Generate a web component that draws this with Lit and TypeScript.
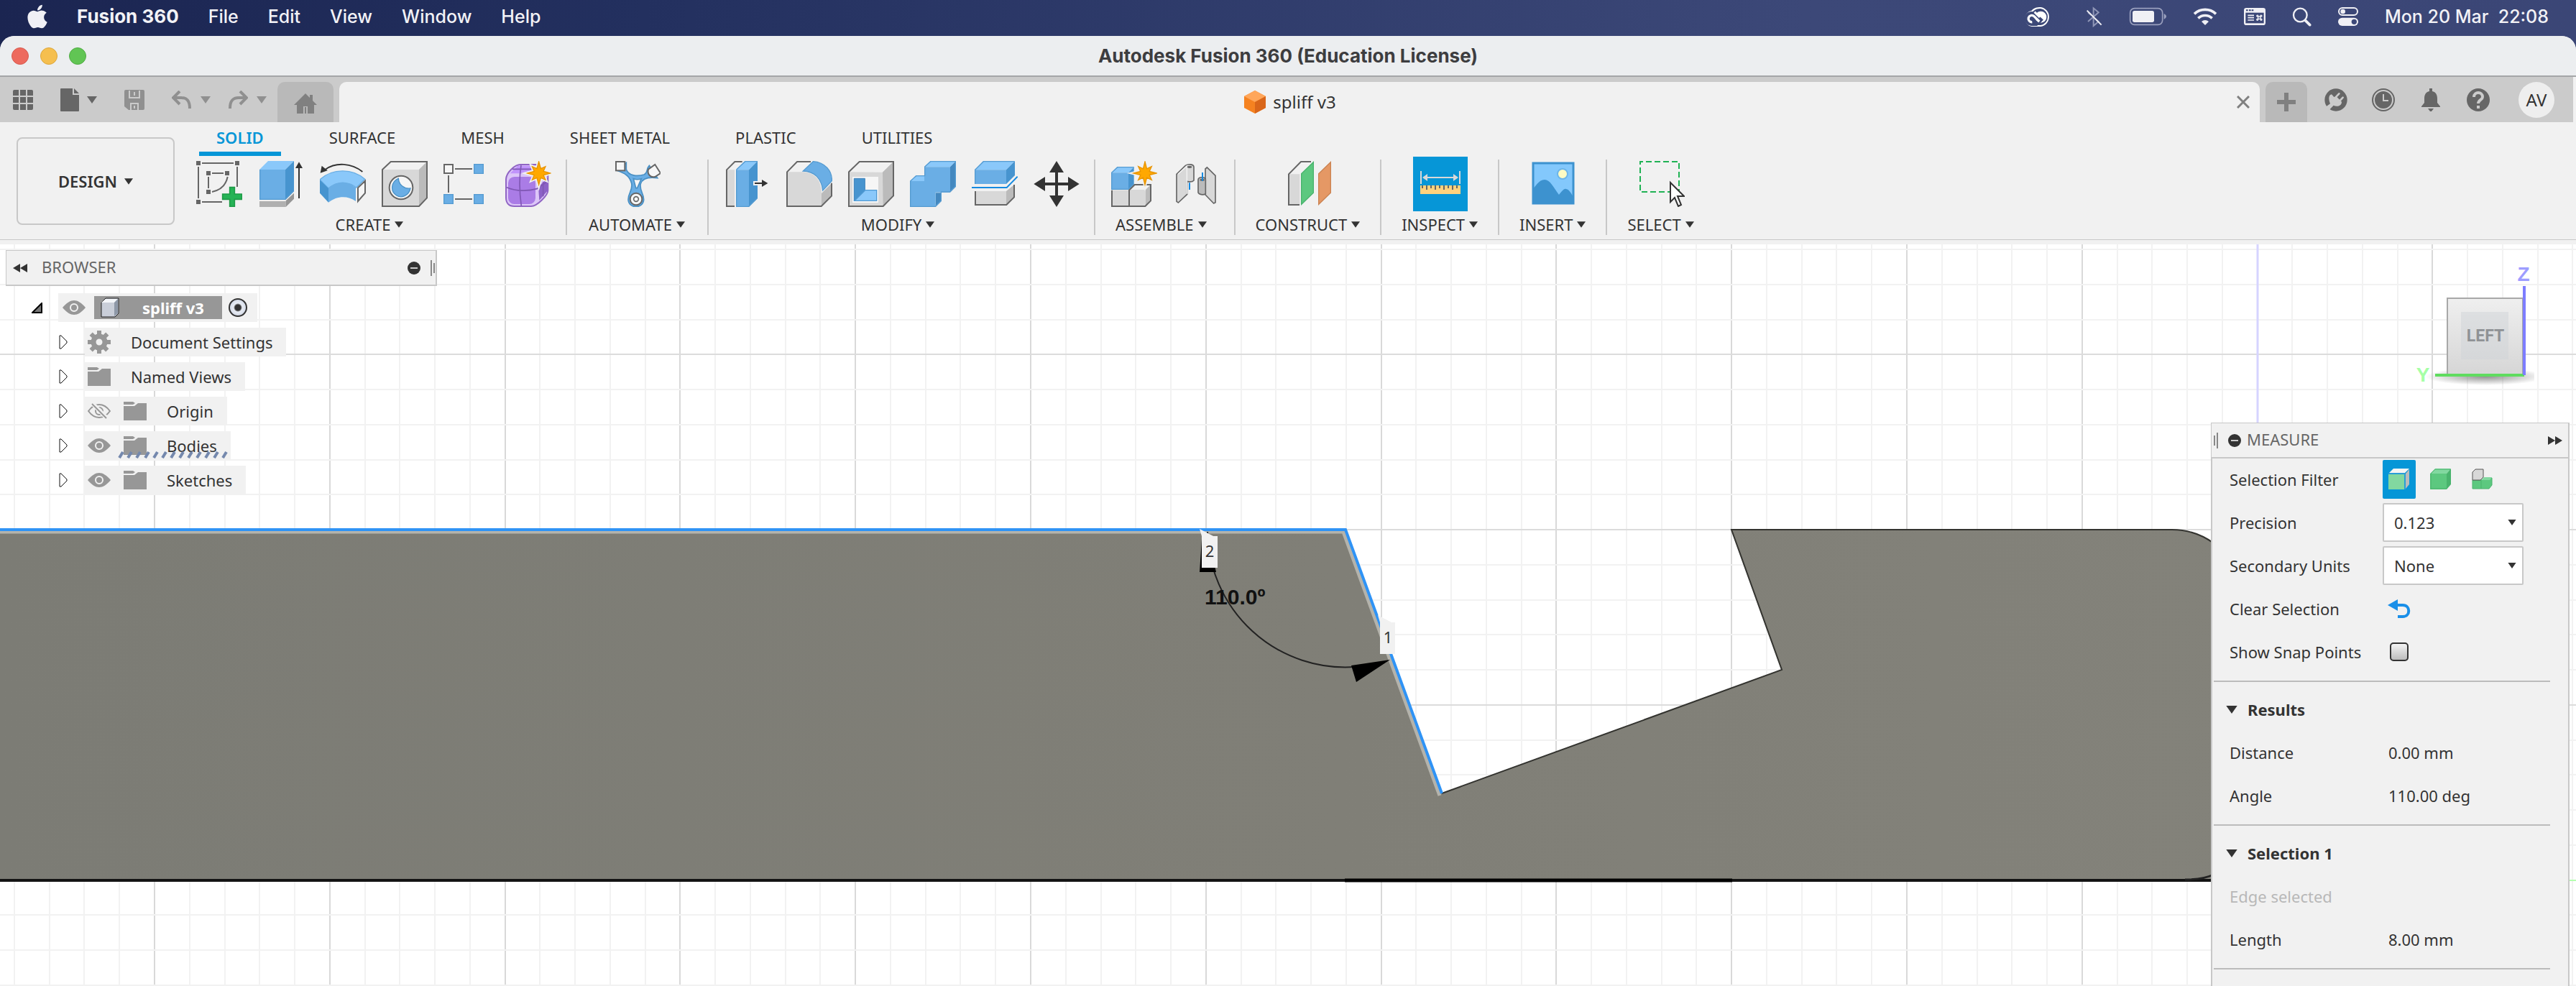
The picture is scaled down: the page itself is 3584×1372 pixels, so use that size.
import { LitElement, html, svg, css, nothing, type TemplateResult } from "lit";
import { customElement, state } from "lit/decorators.js";
import { classMap } from "lit/directives/class-map.js";

/* ---------- helpers ---------- */

const star = (cx: number, cy: number, outer: number, inner: number) => {
  const pts: string[] = [];
  for (let i = 0; i < 16; i++) {
    const r = i % 2 ? inner : i % 4 ? outer * 0.82 : outer;
    const a = (Math.PI / 8) * i - Math.PI / 2;
    pts.push(`${(cx + r * Math.cos(a)).toFixed(1)},${(cy + r * Math.sin(a)).toFixed(1)}`);
  }
  const points = pts.join(" ");
  return svg`<polygon points=${points} fill="#f1f1f1" stroke="#f1f1f1" stroke-width="14"/>
    <polygon points=${points} fill="#ffa800" stroke="#e89400" stroke-width="4"/>`;
};

const pic = (box: string, w: number, h: number, body: unknown) =>
  html`<svg class="pic" viewBox=${box} width=${w} height=${h} fill="none" aria-hidden="true">${body}</svg>`;

const caret = (color = "#333", w = 14, h = 10) =>
  pic("0 0 14 10", w, h, svg`<path d="M0 0H14L7 10Z" fill=${color}/>`);

/* ---------- ribbon icons ---------- */

const sketch = pic("42 42 192 192", 64, 64, svg`
  <path d="M66 51H198M51 66V198M66 213H150M213 66V150M108 93H156M93 108V156" stroke="#666" stroke-width="6"/>
  <path d="M108 171C146 163 167 140 173 108" stroke="#666" stroke-width="6"/>
  <path d="M42 42h18v18h-18zM204 42h18v18h-18zM42 204h18v18h-18zM84 84h18v18h-18zM162 84h18v18h-18zM84 162h18v18h-18z" fill="#666"/>
  <path d="M182 152h20v28h30v22h-30v30h-20v-30h-30v-22h30z" fill="#26b356" stroke="#1f9c48" stroke-width="5"/>`);
const extrude = pic("300 42 192 192", 64, 64, svg`
  <path d="M306 78L342 42H450L414 78Z" fill="#8ac8fa"/><path d="M414 78L450 42V168L414 204Z" fill="#4794cf"/>
  <path d="M306 78H414V204H306Z" fill="#6aaee5"/><path d="M308 78V202H414L449 167" stroke="#559bd1" stroke-width="4"/>
  <path d="M306 210H416V234H306Z" fill="#b0b0b0"/><path d="M416 208L450 176V200L416 234Z" fill="#969696"/>
  <path d="M471 68V198" stroke="#333" stroke-width="6"/><path d="M471 46L486 72H456Z" fill="#333"/>`);
const revolve = pic("558 42 192 192", 64, 64, svg`
  <path d="M736 87C690 50 625 46 580 78" stroke="#333" stroke-width="6"/><path d="M560 92L566 62L590 82Z" fill="#333"/>
  <path d="M558 120C610 72 695 72 746 118L710 153C675 125 630 125 594 156Z" fill="#8ac8fa" stroke="#69aee5" stroke-width="4"/>
  <path d="M558 121L594 156V215L558 176Z" fill="#4794cf"/>
  <path d="M594 156C630 125 675 125 708 153V210C675 186 630 186 594 215Z" fill="#6aaee5"/>
  <path d="M717 154L747 125V176L717 210Z" fill="#f5f5f5" stroke="#666" stroke-width="6"/>`);
const hole = pic("816 42 192 192", 64, 64, svg`
  <path d="M819 78L854 45H1005V196L972 231H819Z" fill="#d8d8d8"/><path d="M819 78L854 45H1005L972 78Z" fill="#f1f1f1"/>
  <path d="M972 78L1005 45V196L972 231Z" fill="#bbb"/>
  <path d="M819 78L854 45H1005V196L972 231H819Z" stroke="#666" stroke-width="6"/>
  <circle cx="897" cy="153" r="49" fill="#f6f6f6" stroke="#666" stroke-width="6"/>
  <path d="M886 115C886 140 910 160 936 156C930 185 900 200 878 186C850 168 856 128 886 115Z" fill="#6aaee5" stroke="#4b93c8" stroke-width="4"/>`);
const pattern = pic("1074 42 192 192", 64, 64, svg`
  <path d="M1122 75H1194M1095 102V174M1122 201H1194" stroke="#666" stroke-width="6"/>
  <path d="M1077 57h36v36h-36z" fill="#f6f6f6" stroke="#666" stroke-width="6"/>
  <path d="M1202 56h38v38h-38zM1076 182h38v38h-38zM1202 182h38v38h-38z" fill="#6aaee5" stroke="#559bd1" stroke-width="4"/>`);
const form = pic("1332 42 192 192", 64, 64, svg`
  <path d="M1335 118C1336 90 1372 57 1395 57H1470L1510 100V165C1510 185 1465 231 1440 231H1370C1345 231 1335 215 1335 195Z" fill="#dcc6f8" stroke="#9065c4" stroke-width="6"/>
  <path d="M1352 94L1384 62H1470L1440 94Z" fill="#c093fb"/><path d="M1470 150L1510 112V165L1474 206Z" fill="#8c62c7"/>
  <rect x="1344" y="108" width="114" height="114" rx="26" fill="#aa7ce6"/>
  <path d="M1338 152C1380 170 1430 168 1464 158L1510 126M1398 60C1390 110 1392 180 1399 230M1362 76H1440M1490 130V190" stroke="#7f57b4" stroke-width="5"/>
  ${star(1472, 93, 48, 21)}`);
const automate = pic("45 27 192 192", 64, 64, svg`
  <path d="M52 66C90 78 108 90 116 120C122 150 102 160 102 188C104 228 165 228 167 188C166 160 148 150 154 122C160 104 182 92 224 98L190 46C176 60 186 76 168 84C140 92 104 90 94 62V34Z" fill="#6aaee5" stroke="#4a90c4" stroke-width="5"/>
  <path d="M124 101C134 105 146 105 157 101L140 140H134Z" fill="#f6f6f6" stroke="#4a90c4" stroke-width="5"/>
  <rect x="51" y="30" width="37" height="37" fill="#f6f6f6" stroke="#666" stroke-width="6"/>
  <path d="M214 42L237 78L214 93C196 98 180 82 186 62Z" fill="#f6f6f6" stroke="#666" stroke-width="6"/>
  <circle cx="135" cy="186" r="25" fill="#f6f6f6" stroke="#666" stroke-width="6"/><circle cx="135" cy="186" r="10" stroke="#666" stroke-width="5"/>`);
const pressPull = pic("510 27 192 192", 64, 64, svg`
  <path d="M519 64H552V216H519Z" fill="#d8d8d8"/><path d="M584 30H553L519 64V216H552" stroke="#666" stroke-width="6"/>
  <path d="M558 64L595 27H648L612 64Z" fill="#8ac8fa"/><path d="M612 64L648 27V183L612 219Z" fill="#4794cf"/><path d="M558 64H612V219H558Z" fill="#6aaee5"/>
  <path d="M560 64V217H611L646 182M560 63L596 29H648" stroke="#559bd1" stroke-width="4"/>
  <path d="M630 111h22v18h-22z" fill="#f1f1f1"/><path d="M636 120H670" stroke="#333" stroke-width="6"/><path d="M691 120L666 105V135Z" fill="#333"/>`);
const fillet = pic("768 27 192 192", 64, 64, svg`
  <path d="M771 73H840C890 76 915 110 915 165V216H771Z" fill="#d8d8d8"/><path d="M915 162L957 120V174L915 216Z" fill="#bbb"/>
  <path d="M870 30H813L771 73V216H914L957 173V119" stroke="#666" stroke-width="6"/>
  <path d="M838 69L880 29C930 32 960 70 958 110L920 150C916 100 884 70 838 69Z" fill="#6aaee5" stroke="#559bd1" stroke-width="4"/>`);
const shell = pic("1026 27 192 192", 64, 64, svg`
  <path d="M1029 73L1073 30H1215V172L1172 216H1029Z" fill="#d8d8d8"/><path d="M1029 73L1073 30H1215L1170 74Z" fill="#f1f1f1"/><path d="M1170 74L1215 30V172L1172 216Z" fill="#bbb"/>
  <path d="M1029 73L1073 30H1215V172L1172 216H1029Z" stroke="#666" stroke-width="6"/>
  <path d="M1044 93h108v108h-108z" fill="#f6f6f6"/><path d="M1051 100H1096V149L1051 194Z" fill="#4794cf" stroke="#3b83bb" stroke-width="3"/>
  <path d="M1097 149H1145V193H1053Z" fill="#8ac8fa" stroke="#4f9ad4" stroke-width="4"/>`);
const combine = pic("1284 27 192 192", 64, 64, svg`
  <path d="M1284 111L1309 88H1350V111ZM1344 52L1369 27H1476L1452 52Z" fill="#8ac8fa"/>
  <path d="M1452 52L1476 27V134L1452 158ZM1391 160H1416V194L1391 219Z" fill="#4488bf"/>
  <path d="M1344 52H1452V158H1391V219H1284V111H1344Z" fill="#6aaee5"/>
  <path d="M1286 111L1310 89H1346V51L1370 29H1474V133L1450 156H1414V193L1390 217H1286Z" stroke="#559bd1" stroke-width="4"/>`);
const split = pic("42 27 192 192", 64, 64, svg`
  <path d="M54 64L90 27H222L186 64Z" fill="#8ac8fa"/><path d="M186 64L222 27V87L186 123Z" fill="#4794cf"/><path d="M54 64H186V123H54Z" fill="#6aaee5"/>
  <path d="M56 123V64L91 29H220" stroke="#559bd1" stroke-width="4"/>
  <path d="M42 138H188L233 92" stroke="#168ae0" stroke-width="6"/>
  <path d="M57 153H186V210H57Z" fill="#d8d8d8"/><path d="M186 153L219 126V178L186 210Z" fill="#bbb"/><path d="M57 153V210H187L219 178V126" stroke="#666" stroke-width="6"/>`);
const move = pic("300 27 192 192", 64, 64, svg`
  <path d="M396 60V190M330 123H460" stroke="#333" stroke-width="12"/>
  <path d="M396 27L426 75H366ZM396 219L366 171H426ZM301 123L348 93V153ZM491 123L444 153V93Z" fill="#333"/>`);
const component = pic("624 27 192 192", 64, 64, svg`
  <path d="M624 76L649 52H719L696 76Z" fill="#8ac8fa"/><path d="M696 76L719 52V124L696 147Z" fill="#4794cf"/><path d="M624 76H696V147H624Z" fill="#6aaee5"/>
  <path d="M626 146V76L650 53H719M626 145H696L718 123" stroke="#559bd1" stroke-width="4"/>
  <path d="M627 149H699V216H627Z" fill="#d8d8d8"/><path d="M701 147L724 126H789V193L766 216H701Z" fill="#d8d8d8"/><path d="M701 147L724 126H789L768 147Z" fill="#f1f1f1"/><path d="M768 147L789 126V193L768 216Z" fill="#bbb"/>
  <path d="M627 149V216H766L789 193V126H722L699 149V216" stroke="#666" stroke-width="6"/>
  ${star(765, 78, 48, 20)}`);
const joint = pic("882 27 192 192", 64, 64, svg`
  <path d="M897 82L934 46C945 38 970 40 969 54V108C964 114 950 114 941 112V166L904 201L897 196Z" fill="#d8d8d8" stroke="#666" stroke-width="5"/>
  <path d="M903 82L940 48V110L941 164" stroke="#f4f4f4" stroke-width="4"/><ellipse cx="951" cy="52" rx="10" ry="5" fill="#666"/>
  <path d="M951 118V147" stroke="#168ae0" stroke-width="6"/>
  <path d="M1017 60L1024 54L1059 88V200L1052 204L1017 168Z" fill="#d8d8d8" stroke="#666" stroke-width="5"/>
  <path d="M987 106C987 92 1018 92 1018 104V164C1008 170 990 168 987 158Z" fill="#bbb" stroke="#666" stroke-width="5"/>
  <ellipse cx="1004" cy="106" rx="10" ry="5" fill="#666"/><path d="M1005 75V110" stroke="#168ae0" stroke-width="6"/>`);
const plane = pic("1350 27 192 192", 64, 64, svg`
  <path d="M1365 82H1411V210H1365Z" fill="#d8d8d8"/><path d="M1458 30H1416L1365 82V210H1410" stroke="#666" stroke-width="6"/>
  <path d="M1418 80L1468 32V160L1418 208Z" fill="#5cc87f" stroke="#49b36d" stroke-width="4"/>
  <path d="M1490 80L1540 32V160L1490 208Z" fill="#e59865" stroke="#cb8352" stroke-width="4"/>`);
const measure = pic("1968 218 76 76", 76, 76, svg`
  <path d="M1979 238V256M2033 238V256M1985 247H2027" stroke="#d8d8d8" stroke-width="2"/><path d="M1981 247l7-5v10zM2031 247l-7-5v10z" fill="#d8d8d8"/>
  <path d="M1978 258h56v12h-56z" fill="#ffd27d"/><path d="M1981 258v4M1987 258v6M1993 258v4M1999 258v6M2005 258v4M2011 258v6M2017 258v4M2023 258v6M2029 258v4" stroke="#666" stroke-width="2"/>`);
const insert = pic("2127 224 64 64", 64, 64, svg`
  <path d="M2131 227h56v56h-56z" fill="#83c8fc" stroke="#3d92cf" stroke-width="3"/><circle cx="2172" cy="242" r="7" fill="#fdfbc4" stroke="#6cb5ea" stroke-width="2"/>
  <path d="M2131 263C2137 255 2141 250 2147 250C2155 250 2160 262 2167 271C2172 265 2174 262 2177 263C2182 264 2184 270 2188 275V284H2131Z" fill="#3d92cf"/>`);
const select = pic("2275 224 64 64", 64, 64, svg`
  <rect x="2277" y="225" width="54" height="42" stroke="#1fb254" stroke-width="2" stroke-dasharray="8 4" stroke-dashoffset="4"/>
  <path d="M2319 254V281L2325 275L2330 287L2334 285L2329 273H2338Z" fill="#fff" stroke="#333" stroke-width="2"/>`);

const groups = [
  { name: "CREATE", icons: [["Sketch", sketch], ["Extrude", extrude], ["Revolve", revolve], ["Hole", hole], ["Pattern", pattern], ["Form", form]] },
  { name: "AUTOMATE", icons: [["Automated Modeling", automate]], wide: true },
  { name: "MODIFY", icons: [["Press Pull", pressPull], ["Fillet", fillet], ["Shell", shell], ["Combine", combine], ["Split Body", split], ["Move", move]] },
  { name: "ASSEMBLE", icons: [["New Component", component], ["Joint", joint]] },
  { name: "CONSTRUCT", icons: [["Offset Plane", plane]] },
  { name: "INSPECT", icons: [["Measure", measure]], active: true },
  { name: "INSERT", icons: [["Canvas", insert]] },
  { name: "SELECT", icons: [["Select", select]] },
] as { name: string; icons: [string, TemplateResult][]; active?: boolean; wide?: boolean }[];

/* ---------- tree icons ---------- */

const eye = pic("0 0 32 20", 32, 20, svg`
  <path d="M0 10C6 3 11 0 16 0S26 3 32 10C26 17 21 20 16 20S6 17 0 10Z" fill="#979797"/><circle cx="16" cy="10" r="5" stroke="#f1f1f1" stroke-width="2"/>`);
const eyeOff = pic("0 0 32 22", 32, 22, svg`
  <path d="M1 11C6 4 11 2 16 2S26 4 31 11C26 18 21 20 16 20S6 18 1 11Z" stroke="#979797" stroke-width="2"/><circle cx="16" cy="11" r="5" stroke="#979797" stroke-width="2"/>
  <path d="M7 1L27 21" stroke="#f1f1f1" stroke-width="6"/><path d="M6 1L26 21" stroke="#979797" stroke-width="2"/>`);
const folder = pic("0 0 32 26", 32, 26, svg`
  <path d="M0 0H13L16 2L13 4H0ZM0 6H15L20 2H32V26H0Z" fill="#979797"/>`);
const gear = pic("0 0 32 32", 32, 32, svg`
  <circle cx="16" cy="16" r="8" stroke="#979797" stroke-width="7"/>
  <g stroke="#979797" stroke-width="6">${[0, 45, 90, 135].map((a) => svg`<path d="M16 0V6M16 26V32" transform="rotate(${a} 16 16)"/>`)}</g>`);
const bodyCube = pic("0 0 28 28", 28, 28, svg`
  <path d="M2 7L8 1H26V22L21 27H2Z" fill="#c9ced9" stroke="#222" stroke-width="1"/><path d="M2 7L8 2H25L20 7Z" fill="#f4f6fa"/><path d="M20 7L25 2V22L20 26Z" fill="#8e98a8"/>`);

type Row = { label: string; vis?: "on" | "off"; kind: "gear" | "folder"; marked?: boolean };
const rows: Row[] = [
  { label: "Document Settings", kind: "gear" },
  { label: "Named Views", kind: "folder" },
  { label: "Origin", kind: "folder", vis: "off" },
  { label: "Bodies", kind: "folder", vis: "on", marked: true },
  { label: "Sketches", kind: "folder", vis: "on" },
];

const minus = pic("0 0 18 18", 18, 18, svg`<circle cx="9" cy="9" r="9" fill="#333"/><path d="M4 9H14" stroke="#ccc" stroke-width="2"/>`);
const range = (n: number) => Array.from({ length: n }, (_, i) => i);

@customElement("app-root")
export class AppRoot extends LitElement {
  @state() private tab = "SOLID";
  @state() private filter = 0;

  static styles = css`
    :host {
      display: flex;
      flex-direction: column;
      height: 100vh;
      overflow: hidden;
      background: linear-gradient(90deg, #1b2551, #23305f 25%, #3c4878 70%, #3b4676);
      color: #333;
      font: 22px/30px "Noto Sans", "Open Sans", sans-serif;
    }
    * { box-sizing: border-box; }
    button { border: 0; padding: 0; background: none; color: inherit; font: inherit; display: flex; align-items: center; }
    .pic { display: block; flex: none; }
    .menubar { flex: none; display: flex; align-items: center; height: 50px; padding: 0 38px 4px; color: #f2f2f6; font: 500 25px/40px Inter, sans-serif; }
    .menubar nav { display: flex; align-items: center; gap: 41px; flex: 1; }
    .menubar .app { font-size: 26px; font-weight: 700; }
    .status { display: flex; align-items: center; gap: 36px; }
    .status .cloud { margin-right: 12px; }
    .status time { white-space: pre; }
    .window { flex: 1; min-height: 0; display: flex; flex-direction: column; border-radius: 20px 20px 0 0; overflow: hidden; background: #f1f1f1; }
    .titlebar { flex: none; display: grid; grid-template-columns: 1fr auto 1fr; align-items: center; height: 57px; padding: 0 16px; background: #eceef0; border-bottom: 2px solid #a4a6a8; }
    .titlebar h1 { margin: 0; font: 700 26px/32px Inter, sans-serif; color: #3d3d3f; }
    .lights { display: flex; gap: 16px; }
    .light { width: 24px; height: 24px; border-radius: 50%; background: #ed6a5e; border: 1px solid #d65b50; }
    .light.min { background: #f5bf4f; border-color: #dba63c; }
    .light.max { background: #61c554; border-color: #50ab44; }
    .strip { flex: none; display: flex; align-items: flex-end; height: 63px; margin-right: 4px; background: #cbcbcb; }
    .quick { display: flex; align-items: center; align-self: stretch; width: 386px; padding-left: 18px; gap: 38px; }
    .quick .pair { gap: 11px; }
    .quick .history { gap: 12px; }
    .quick .history + .history { margin-left: -14px; }
    .home, .plus { justify-content: center; height: 56px; width: 78px; background: #b9b9b9; border-radius: 10px 10px 0 0; }
    .home { padding-top: 4px; }
    .plus { width: 58px; margin-right: 24px; }
    .doc { flex: 1; display: flex; align-items: center; height: 56px; margin: 0 8px; padding: 0 14px 0 6px; background: #f1f1f1; border-radius: 10px 10px 0 0; font-size: 24px; }
    .doc .name { flex: 1; display: flex; align-items: center; justify-content: center; gap: 10px; }
    .tools { display: flex; align-items: center; align-self: stretch; gap: 34px; padding-right: 26px; }
    .avatar { justify-content: center; width: 50px; height: 50px; margin-left: 6px; border-radius: 50%; background: #eee; font-size: 24px; }
    .ribbon { flex: none; display: flex; align-items: flex-start; height: 164px; border-bottom: 1px solid #c8c8c8; }
    .design { justify-content: center; gap: 10px; width: 220px; height: 122px; margin: 21px 8px 0 23px; border: 2px solid #c8c8c8; border-radius: 8px; font-weight: 600; }
    .tabs { display: flex; gap: 43px; padding-left: 26px; }
    .tab { height: 47px; padding: 0 24px; border-bottom: 6px solid transparent; }
    .tab.on { color: #0696d7; border-color: #0696d7; font-weight: 600; }
    .groups { display: flex; padding-top: 1px; }
    .group { display: flex; flex-direction: column; align-items: center; padding: 0 20px 0 22px; }
    .group.wide { padding: 0 23px 0 24px; }
    .group + .group { border-left: 2px solid transparent; border-image: linear-gradient(transparent 5px, #c8c8c8 5px, #c8c8c8 108px, transparent 108px) 1; }
    .icons { display: flex; align-items: center; gap: 22px; height: 76px; }
    .icons .active { background: #0696d7; }
    .grouplabel { gap: 6px; padding: 3px 8px 3px 6px; }
    .multi .grouplabel { margin-right: 10px; }
    .canvas { position: relative; flex: 1; min-height: 0; margin-top: 6px; background: #fff; overflow: hidden; }
    .scene { position: absolute; inset: 0; width: 100%; height: 100%; }
    .browser { position: absolute; left: 8px; top: 8px; width: 600px; }
    .panelhead { display: flex; align-items: center; height: 50px; background: #f1f1f1; border: solid #c8c8c8; border-width: 1px 2px 2px 1px; color: #666; }
    .panelhead h2 { flex: 1; margin: 0; padding-bottom: 3px; font: inherit; }
    .browser .panelhead { gap: 20px; padding: 0 1px 0 9px; }
    .browser .panelhead .grip { margin-left: -6px; }
    .tree { list-style: none; margin: 10px 0 0; padding: 0; display: flex; flex-direction: column; gap: 8px; }
    .tree li { display: flex; align-items: center; gap: 24px; padding-left: 74px; }
    .tree li.root { gap: 22px; padding-left: 36px; }
    .cell { position: relative; display: flex; align-items: center; gap: 18px; height: 40px; padding: 0 18px 0 4px; background: #f1f1f1; }
    .cell .text { padding: 0 1px 1px 10px; }
    .root .cell { gap: 0; padding: 0 14px 0 6px; }
    .root .sel { display: flex; align-items: center; height: 32px; margin: 0 9px 0 12px; padding: 0 25px 0 8px; gap: 31px; background: #979797; color: #fff; font-weight: 700; }
    .radio { appearance: none; width: 26px; height: 26px; margin: 0; border: 2px solid #333; border-radius: 50%; background: radial-gradient(#333 4px, #e9edf5 6px, #c3cbdc); }
    .squiggle { position: absolute; left: 46px; bottom: 2px; }
    .measure { position: absolute; right: 9px; top: 248px; bottom: 0; width: 499px; display: flex; flex-direction: column; }
    .measure .panelhead { padding: 0 8px 0 3px; flex: none; }
    .measure .panelhead h2 { padding-left: 8px; }
    .measure .panelhead .min { margin-left: 14px; }
    .props { flex: 1; background: #f1f1f1; border: solid #c8c8c8; border-width: 0 2px 0 2px; }
    .prop { display: grid; grid-template-columns: 213px 1fr; align-items: center; height: 60px; padding: 0 0 2px 24px; }
    .prop.value { grid-template-columns: 221px 1fr; }
    .prop.dim { color: #b8b8b8; }
    .filters { display: flex; gap: 12px; }
    .filters button { justify-content: center; width: 46px; height: 54px; border-radius: 2px; }
    .filters .on { background: #0696d7; }
    .pick { position: relative; width: 196px; }
    .pick select { appearance: none; display: block; width: 100%; height: 54px; padding: 0 14px; border: 2px solid #c8c8c8; border-radius: 2px; background: #fff; color: #333; font: inherit; }
    .pick .pic { position: absolute; right: 10px; top: 23px; pointer-events: none; }
    .undo { width: 34px; margin-left: 7px; }
    .check { appearance: none; width: 26px; height: 26px; margin: 0 0 0 10px; border: 2px solid #333; border-radius: 5px; background: linear-gradient(#f4f4f4, #bdbdbd); }
    .rule { height: 20px; margin: 0 25px 0 2px; border: 0; background: linear-gradient(#bcbcbc, #bcbcbc) center / 100% 2px no-repeat; }
    .section { display: flex; align-items: center; height: 60px; padding: 0 0 2px 18px; }
    .section button { gap: 13px; font-weight: 700; }
    .pin { fill: #333; font: 22px "Noto Sans", sans-serif; text-anchor: middle; }
    .angle { fill: #111; font: bold 30px "Liberation Sans", Arial, sans-serif; }
    .axis { font: bold 28px "Liberation Sans", Arial, sans-serif; text-anchor: middle; }
    .face { fill: #8f9295; font: bold 23px Roboto, sans-serif; text-anchor: middle; }
    .cube { position: absolute; right: 58px; top: 20px; }
  `;

  private renderMenu() {
    const c = "#f0f0f5";
    return html`<header class="menubar">
      <nav>
        <a href="#" aria-label="Apple menu">${pic("0 20 384 470", 28, 34, svg`<path fill=${c} d="M318.7 268.7c-.2-36.7 16.4-64.4 50-84.8-18.8-26.9-47.2-41.7-84.7-44.6-35.5-2.8-74.3 20.7-88.5 20.7-15 0-49.4-19.7-76.4-19.7C63.3 141.2 4 184.8 4 273.5q0 39.3 14.4 81.2c12.8 36.7 59 126.7 107.2 125.2 25.2-.6 43-17.9 75.8-17.9 31.8 0 48.3 17.9 76.4 17.9 48.6-.7 90.4-82.5 102.6-119.3-65.2-30.7-61.7-90-61.7-91.9zm-56.6-164.2c27.3-32.4 24.8-61.9 24-72.5-24.1 1.4-52 16.4-67.9 34.9-17.5 19.8-27.8 44.3-25.6 71.9 26.1 2 49.9-11.4 69.5-34.3z"/>`)}</a>
        <button class="app">Fusion 360</button>
        ${["File", "Edit", "View", "Window", "Help"].map((m) => html`<button>${m}</button>`)}
      </nav>
      <div class="status">
        <span class="cloud">${pic("66 33 120 87", 40, 29, svg`
          <path d="M104 50C112 40 124 36 142 36A41 41 0 0 1 142 117H104A34 34 0 0 1 104 50Z" fill="#fff"/>
          <path d="M108 56C116 46 126 42 142 42A35 35 0 0 1 142 111H104A27 27 0 0 1 108 56Z" fill="#3c4878"/>
          <circle cx="142" cy="77" r="24" fill="#fff"/>
          <path d="M128 104H104A20 20 0 1 1 118 70L146 96" stroke="#3c4878" stroke-width="20"/>
          <path d="M106 98A14 14 0 1 1 114 74L136 96" stroke="#fff" stroke-width="10"/>
          <path d="M116 56L138 78" stroke="#fff" stroke-width="9"/>`)}</span>
        ${pic("333 33 72 87", 24, 29, svg`<path d="M342 96L386 58L365 40V114L386 96L372 84M342 58L356 70" stroke="#8f96b6" stroke-width="6"/><path d="M338 50L398 110" stroke=${c} stroke-width="6"/>`)}
        ${pic("507 33 159 78", 53, 26, svg`<rect x="512" y="38" width="135" height="68" rx="18" stroke="#9aa0be" stroke-width="5"/><rect x="522" y="48" width="90" height="48" rx="8" fill=${c}/><path d="M653 60Q664 66 663 73Q662 80 653 84Z" fill="#9aa0be"/>`)}
        ${pic("771 30 102 78", 34, 26, svg`<path d="M777 58A66 66 0 0 1 867 58M793 76A42 42 0 0 1 851 76" stroke=${c} stroke-width="11"/><path d="M807 90A22 22 0 0 1 837 90L822 105Z" fill=${c}/>`)}
        ${pic("984 33 96 78", 32, 26, svg`<rect x="987" y="36" width="90" height="72" rx="10" fill=${c}/><path d="M994 56H1070V100H994Z" fill="#3c4878"/><path d="M996 46h8M1008 46h8M1019 46h8" stroke="#3c4878" stroke-width="6"/>
          <path d="M1003 67H1029M1003 77H1029M1003 87H1029" stroke=${c} stroke-width="5"/><path d="M1046 72h10v10h-10zM1046 72h-4a3 3 0 1 1 4-4zM1056 72v-4a3 3 0 1 1 4 4zM1056 82h4a3 3 0 1 1-4 4zM1046 82v4a3 3 0 1 1-4-4z" stroke=${c} stroke-width="4"/>`)}
        ${pic("1194 33 81 81", 27, 27, svg`<circle cx="1228" cy="66" r="28" stroke=${c} stroke-width="7"/><path d="M1249 88L1268 107" stroke=${c} stroke-width="11" stroke-linecap="round"/>`)}
        ${pic("1383 33 90 84", 30, 28, svg`<rect x="1389" y="39" width="78" height="30" rx="15" stroke=${c} stroke-width="6"/><circle cx="1406" cy="54" r="10" fill=${c}/><rect x="1386" y="80" width="84" height="34" rx="17" fill=${c}/><circle cx="1453" cy="97" r="11" fill="#3c4878"/>`)}
        <time>Mon 20 Mar  22:08</time>
      </div>
    </header>`;
  }

  private renderStrip() {
    const d = "#666", g = "#909090";
    return html`<div class="strip">
      <div class="quick">
        <button aria-label="Data panel">${pic("0 0 28 28", 28, 28, svg`<rect width="28" height="28" rx="2" fill=${d}/><path d="M0 9H28M0 19H28M9 0V28M19 0V28" stroke="#cbcbcb" stroke-width="2"/>`)}</button>
        <button class="pair" aria-label="File">${pic("0 0 26 32", 26, 32, svg`<path d="M1 0H17V9H26V31Q26 32 25 32H1Q0 32 0 31V1Q0 0 1 0ZM19 0L26 7H19Z" fill=${d}/>`)}${caret(d)}</button>
        <button aria-label="Save">${pic("0 0 28 28", 28, 28, svg`<path d="M2 0H26Q28 0 28 2V26Q28 28 26 28H6L0 23V2Q0 0 2 0Z" fill=${g}/><path d="M7 1V11H21V1M9 28V19H19V28M14 3V8M14 22V26" stroke="#cbcbcb" stroke-width="2"/>`)}</button>
        <button class="history" aria-label="Undo">${pic("0 0 28 26", 28, 26, svg`<path d="M11 1L2 10L11 19M3 10H13C21 10 25 14 25 25" stroke=${g} stroke-width="4"/>`)}${caret(g)}</button>
        <button class="history" aria-label="Redo">${pic("0 0 28 26", 28, 26, svg`<path d="M17 1L26 10L17 19M25 10H15C7 10 3 14 3 25" stroke=${g} stroke-width="4"/>`)}${caret(g)}</button>
      </div>
      <button class="home" aria-label="Home">${pic("0 0 32 28", 32, 28, svg`<path d="M16 0L22 6V2H26V10L32 16H28V28H19V18H13V28H4V16H0Z" fill="#808080"/><path d="M15 19h2v9h-2z" fill="#808080"/>`)}</button>
      <div class="doc">
        <span class="name">${pic("0 0 30 32", 30, 32, svg`<path d="M15 0L30 8V24L15 32L0 24V8Z" fill="#f58220"/><path d="M15 0L30 8L15 16L0 8Z" fill="#ffa65a"/><path d="M15 16L30 8V24L15 32Z" fill="#d9661a"/>`)}spliff v3</span>
        <button aria-label="Close tab">${pic("0 0 18 18", 18, 18, svg`<path d="M1 1L17 17M17 1L1 17" stroke="#808080" stroke-width="3"/>`)}</button>
      </div>
      <button class="plus" aria-label="New tab">${pic("0 0 26 26", 26, 26, svg`<path d="M13 0V26M0 13H26" stroke="#808080" stroke-width="6"/>`)}</button>
      <div class="tools">
        <button aria-label="Extensions">${pic("1332 366 96 96", 32, 32, svg`<circle cx="1380" cy="414" r="47" fill=${d}/>
          <path d="M1356 430C1348 410 1350 392 1362 391L1372 402L1382 400L1404 422C1404 440 1384 444 1370 437L1350 458L1336 444Z" fill="#cbcbcb"/><path d="M1378 404L1393 388M1394 420L1409 404" stroke="#cbcbcb" stroke-width="8" stroke-linecap="round"/>`)}</button>
        <button aria-label="Job status">${pic("0 0 32 32", 32, 32, svg`<circle cx="16" cy="16" r="15" stroke=${d} stroke-width="2"/><circle cx="16" cy="16" r="12" fill=${d}/><path d="M16 8V17H23" stroke="#cbcbcb" stroke-width="2"/>`)}</button>
        <button aria-label="Notifications">${pic("0 0 32 32", 32, 32, svg`<path d="M14 4V0H18V4C23 5 25 9 25 14V20L29 25V26H3V25L7 20V14C7 9 9 5 14 4ZM12 28H20L17 32H15Z" fill=${d}/>`)}</button>
        <button aria-label="Help">${pic("0 0 32 32", 32, 32, svg`<circle cx="16" cy="16" r="16" fill=${d}/><path d="M10 12C10 4 22 4 22 12C22 16 16 16 16 21M16 24V28" stroke="#cbcbcb" stroke-width="4"/>`)}</button>
        <button class="avatar">AV</button>
      </div>
    </div>`;
  }

  private renderRibbon() {
    return html`<div class="ribbon">
      <button class="design">DESIGN ${caret("#333", 12, 9)}</button>
      <div>
        <div class="tabs" role="tablist">
          ${["SOLID", "SURFACE", "MESH", "SHEET METAL", "PLASTIC", "UTILITIES"].map((t) => html`
            <button role="tab" class=${classMap({ tab: true, on: this.tab === t })} @click=${() => (this.tab = t)}>${t}</button>`)}
        </div>
        <div class="groups">
          ${groups.map((g) => html`<section class=${classMap({ group: true, wide: !!g.wide, multi: g.icons.length > 1 })}>
            <div class="icons">${g.icons.map(([name, icon]) => html`<button aria-label=${name} class=${g.active ? "active" : "tool"}>${icon}</button>`)}</div>
            <button class="grouplabel">${g.name}${caret("#333", 12, 9)}</button>
          </section>`)}
        </div>
      </div>
    </div>`;
  }

  /* Model space: grid, extruded body with notch, selected edges and the angle dimension. */
  private renderScene() {
    const unit = 48.76;
    return html`<svg class="scene" aria-label="Model view"><g transform="translate(0 -340)">
      ${range(74).map((i) => svg`<path d="M${Math.round(19 + (i + 0.02) * unit)} 340V1372" stroke=${i % 5 === 4 ? "#d9d9d9" : "#f2f2f2"} stroke-width="2"/>`)}
      ${range(22).map((i) => svg`<path d="M0 ${Math.round(347 + i * unit)}H3584" stroke=${i % 5 === 3 ? "#dcdcdc" : "#f2f2f2"} stroke-width="2"/>`)}
      <path d="M3141 340V1225" stroke="#d6d4ff" stroke-width="3"/><path d="M3070 1225H3584" stroke="#b5ffb0" stroke-width="2"/>
      <defs><linearGradient id="metal" x2="1" y2="0"><stop stop-color="#7c7c75"/><stop offset=".6" stop-color="#807f77"/><stop offset="1" stop-color="#83827a"/></linearGradient></defs>
      <path d="M0 737H1872L2006 1104L2479 932L2409 737H3022Q3085 740 3110 790V1225H0Z" fill="url(#metal)"/>
      <path d="M2006 1104L2479 932L2409 737H3022A98 98 0 0 1 3080 756" fill="none" stroke="#33332f" stroke-width="2"/>
      <path d="M0 1225H3090" stroke="#141414" stroke-width="4"/><path d="M1871 1225H2410" stroke="#000" stroke-width="5"/><path d="M3040 1224Q3066 1224 3082 1216" fill="none" stroke="#222" stroke-width="3"/>
      <path d="M0 740H1869L2003 1107" fill="none" stroke="#b4b3ac" stroke-width="5"/>
      <path d="M0 737H1872L2006 1104" fill="none" stroke="#2f93f5" stroke-width="4"/>
      <path d="M1680 740A192 192 0 0 0 1885 928" fill="none" stroke="#222" stroke-width="2"/>
      <path d="M1680 745L1692 796H1669L1672 750ZM1934 918L1880 926L1887 949Z" fill="#000"/>
      <text class="angle" x="1676" y="841">110.0º</text>
      <path d="M1669 736L1690 747V790H1672V746ZM1917 856L1936 866H1941V910H1920V866Z" fill="#f1f1f1"/><path d="M1672 746h22v44h-22z" fill="#f1f1f1"/>
      <text class="pin" x="1683" y="775">2</text><text class="pin" x="1931" y="895">1</text>
    </g></svg>`;
  }

  private renderCube() {
    return html`<svg class="cube" width="200" height="190" aria-label="View cube"><g transform="translate(-3326 -360)">
      <defs>
        <linearGradient id="face" x2="0" y2="1"><stop stop-color="#efefef"/><stop offset="1" stop-color="#d6d6d6"/></linearGradient>
        <radialGradient id="shade"><stop stop-color="#777" stop-opacity=".8"/><stop offset="1" stop-color="#777" stop-opacity="0"/></radialGradient>
      </defs>
      <ellipse cx="3458" cy="524" rx="84" ry="12" fill="url(#shade)"/>
      <path d="M3405 415H3510V521H3405Z" fill="url(#face)" stroke="#a8a8a8" stroke-width="2"/><path d="M3424 434h66v66h-66z" fill="#cfd3d8" fill-opacity=".5"/>
      <text class="face" x="3458" y="475">LEFT</text>
      <path d="M3388 522H3512" stroke="#5fdc5f" stroke-width="4"/><path d="M3512 398V522" stroke="#7d7dff" stroke-width="4"/>
      <text class="axis" x="3511" y="391" fill="#9d9dff">Z</text><text class="axis" x="3371" y="531" fill="#a6ffa6">Y</text>
    </g></svg>`;
  }

  private grip(flip = false) {
    return html`<span class="grip">${pic("0 0 6 22", 6, 22, flip
      ? svg`<path d="M1 4V18M5 0V22" stroke="#888" stroke-width="2"/>`
      : svg`<path d="M1 0V22M5 4V18" stroke="#888" stroke-width="2"/>`)}</span>`;
  }

  private renderBrowser() {
    const arrow = pic("0 0 12 20", 12, 20, svg`<path d="M1 1H3L11 9V11L3 19H1Z" fill="#fff" stroke="#111" stroke-width="1"/>`);
    return html`<aside class="browser">
      <div class="panelhead">
        <button aria-label="Collapse browser">${pic("0 0 20 12", 20, 12, svg`<path d="M10 0V12L0 6ZM20 0V12L10 6Z" fill="#333"/>`)}</button>
        <h2>BROWSER</h2><button aria-label="Minimise browser">${minus}</button>${this.grip()}
      </div>
      <ul class="tree">
        <li class="root">
          <button aria-label="Collapse spliff v3">${pic("0 0 15 15", 15, 15, svg`<path d="M1 14L14 1V14Z" fill="#777" stroke="#000" stroke-width="2"/>`)}</button>
          <div class="cell">${eye}<span class="sel">${bodyCube}<span>spliff v3</span></span><input class="radio" type="radio" checked aria-label="Activate spliff v3"></div>
        </li>
        ${rows.map((r) => html`<li>
          <button aria-label="Expand ${r.label}">${arrow}</button>
          <div class="cell">
            ${r.vis ? html`<button aria-label="Visibility of ${r.label}">${r.vis === "on" ? eye : eyeOff}</button>` : nothing}
            ${r.kind === "gear" ? gear : folder}<span class="text">${r.label}</span>
            ${r.marked ? html`<svg class="squiggle" width="156" height="10">${range(13).map((i) => svg`<path d="M${2 + i * 12} 9L${7 + i * 12} 1" stroke="#7488ad" stroke-width="4"/>`)}</svg>` : nothing}
          </div>
        </li>`)}
      </ul>
    </aside>`;
  }

  private pick(id: string, label: string, value: string) {
    return html`<div class="prop"><label for=${id}>${label}</label><span class="pick"><select id=${id}><option>${value}</option></select>${caret("#333", 12, 8)}</span></div>`;
  }

  private value(label: string, value: string) {
    return html`<div class="prop value"><span>${label}</span><span>${value}</span></div>`;
  }

  private renderMeasure() {
    const cube = (front: string, top: string, side: string, edge: string) => svg`<path d="M0 7L7 0H29L23 7Z" fill=${top}/><path d="M23 7L29 0V22L23 29Z" fill=${side}/><path d="M0 7H23V29H0Z" fill=${front}/><path d="M1 7V28H22L28 22V1H7Z" stroke=${edge} stroke-width="1"/>`;
    const filters: [string, TemplateResult][] = [
      ["Faces, edges and vertices", pic("0 0 30 30", 30, 30, svg`<path d="M1 6L7 0H29L23 6Z" fill="#f4f4f4"/><path d="M24 7L29 1V22L24 28Z" fill="#bbb"/><path d="M0 8H22V29H0Z" fill="#82d8a0"/><path d="M0 7H23V29" stroke="#4aa5d8" stroke-width="1"/>`)],
      ["Bodies", pic("0 0 30 30", 30, 30, cube("#5cc87f", "#82d8a0", "#49b36d", "#49b36d"))],
      ["Components", pic("0 0 30 30", 30, 30, svg`<path d="M1 16H14L17 13H28V23L24 28H1Z" fill="#5cc87f" stroke="#49b36d" stroke-width="1"/><path d="M13 16L17 12H28L25 16Z" fill="#82d8a0"/><path d="M13 16V28" stroke="#49b36d" stroke-width="1"/><path d="M1 5L5 1H16V12L12 16H1Z" fill="#d8d8d8" stroke="#555" stroke-width="1"/>`)],
    ];
    const section = (t: string) => html`<div class="section"><button>${caret("#333", 18, 11)}${t}</button></div>`;
    return html`<aside class="measure">
      <div class="panelhead">
        ${this.grip(true)}<button class="min" aria-label="Minimise measure">${minus}</button><h2>MEASURE</h2>
        <button aria-label="Dock measure">${pic("0 0 20 12", 20, 12, svg`<path d="M0 0L10 6L0 12ZM10 0L20 6L10 12Z" fill="#333"/>`)}</button>
      </div>
      <div class="props">
        <div class="prop"><span>Selection Filter</span><span class="filters">
          ${filters.map(([n, i], k) => html`<button aria-label=${n} class=${this.filter === k ? "on" : "off"} @click=${() => (this.filter = k)}>${i}</button>`)}
        </span></div>
        ${this.pick("precision", "Precision", "0.123")}
        ${this.pick("units", "Secondary Units", "None")}
        <div class="prop"><span>Clear Selection</span><button class="undo" aria-label="Clear selection">${pic("0 0 32 26", 32, 26, svg`<path d="M0 8L14 0V16Z" fill="#1a8fe8"/><path d="M12 8H21C32 8 32 24 21 24H14" stroke="#1a8fe8" stroke-width="4"/>`)}</button></div>
        <div class="prop"><label for="snap">Show Snap Points</label><input id="snap" class="check" type="checkbox"></div>
        <hr class="rule">
        ${section("Results")}
        ${this.value("Distance", "0.00 mm")}
        ${this.value("Angle", "110.00 deg")}
        <hr class="rule">
        ${section("Selection 1")}
        <div class="prop dim">Edge selected</div>
        ${this.value("Length", "8.00 mm")}
        <hr class="rule">
      </div>
    </aside>`;
  }

  render() {
    return html`${this.renderMenu()}
      <main class="window">
        <div class="titlebar">
          <div class="lights"><button class="light" aria-label="Close"></button><button class="light min" aria-label="Minimise"></button><button class="light max" aria-label="Zoom"></button></div>
          <h1>Autodesk Fusion 360 (Education License)</h1>
        </div>
        ${this.renderStrip()} ${this.renderRibbon()}
        <div class="canvas">${this.renderScene()}${this.renderCube()}${this.renderBrowser()}${this.renderMeasure()}</div>
      </main>`;
  }
}
